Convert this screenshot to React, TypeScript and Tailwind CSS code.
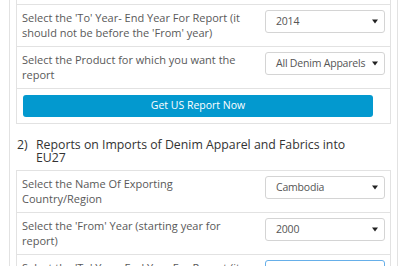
const font = { fontFamily: '"Open Sans", "Liberation Sans", sans-serif' };

function Caret() {
  return (
    <svg width="6" height="5" viewBox="0 0 6 5" className="shrink-0">
      <path d="M0 0.5 L6 0.5 L3 4.5 Z" fill="#222" />
    </svg>
  );
}

function FakeSelect({ value, focused }: { value: string; focused?: boolean }) {
  return (
    <div
      className={`flex h-[23px] w-[120px] items-center justify-between rounded-[3px] border bg-white pl-[10px] pr-[6px] text-[10.5px] tracking-[-0.2px] text-[#555] ${
        focused ? "border-[#66afe9]" : "border-[#d4d4d4]"
      }`}
    >
      <span className="whitespace-nowrap">{value}</span>
      <Caret />
    </div>
  );
}

function Row({ lines, value, focused }: { lines: [string, string]; value: string; focused?: boolean }) {
  return (
    <div className="flex h-[42px] items-start border-b border-[#e2e2e2]">
      <div className="w-[241px] whitespace-nowrap pl-[5px] pt-[6px] text-[11px] leading-[14.5px] text-[#595959]">
        {lines[0]}
        <br />
        {lines[1]}
      </div>
      <div className="pl-[7px] pt-[5px]">
        <FakeSelect value={value} focused={focused} />
      </div>
    </div>
  );
}

export default function App() {
  return (
    <div className="h-[266px] w-[400px] overflow-hidden bg-white" style={font}>
      <div className="ml-[9px] h-full w-[389px] border-x border-[#e2e2e2] pl-[6px] pr-[6px]">
        <div className="border-x border-b border-[#e2e2e2]">
          <div className="h-[5px] border-b border-[#e2e2e2]" />
          <Row
            lines={["Select the 'To' Year- End Year For Report (it", "should not be before the 'From' year)"]}
            value="2014"
          />
          <Row lines={["Select the Product for which you want the", "report"]} value="All Denim Apparels" />
          <div className="px-[6px] pb-[6px] pt-[6px]">
            <div className="flex h-[22px] w-[350px] items-center justify-center rounded-[3px] bg-[#0399cf] text-[10.5px] text-white">
              Get US Report Now
            </div>
          </div>
        </div>

        <div className="mb-[6px] mt-[14px] flex text-[12.3px] leading-[13px] text-[#333]">
          <span className="w-[20px] shrink-0 pl-[1px]">2)</span>
          <span>
            Reports on Imports of Denim Apparel and Fabrics into
            <br />
            EU27
          </span>
        </div>

        <div className="border border-[#e2e2e2]">
          <Row lines={["Select the Name Of Exporting", "Country/Region"]} value="Cambodia" />
          <Row lines={["Select the 'From' Year (starting year for", "report)"]} value="2000" />
          <Row
            lines={["Select the 'To' Year- End Year For Report (it", "should not be before the 'From' year)"]}
            value="2014"
            focused
          />
        </div>
      </div>
    </div>
  );
}
